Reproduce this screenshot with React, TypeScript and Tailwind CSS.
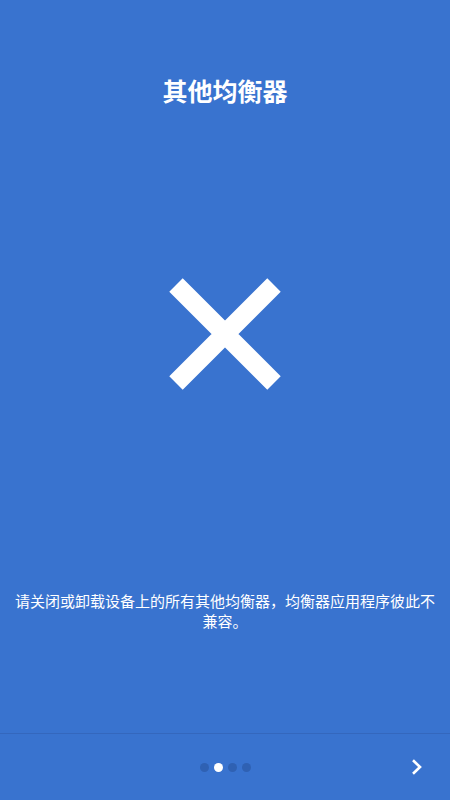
const font = { fontFamily: '"Noto Sans CJK SC", "Noto Sans", sans-serif' };

// Big "X" mark in the middle of the slide
function CrossMark() {
  return (
    <svg width="114" height="114" viewBox="0 0 114 114" className="block">
      <path d="M8 8 L106 106 M106 8 L8 106" stroke="#ffffff" strokeWidth="19" strokeLinecap="butt" />
    </svg>
  );
}

function ChevronNext() {
  return (
    <svg width="12" height="17" viewBox="0 0 12 17" className="block">
      <polyline points="2,1.8 9,8.5 2,15.2" fill="none" stroke="#ffffff" strokeWidth="2.6" />
    </svg>
  );
}

export default function App() {
  const pages = [0, 1, 2, 3];
  const current = 1;

  return (
    <div className="w-[450px] h-[800px] bg-[#3973cf] flex flex-col text-white" style={font}>
      <div className="flex-1 flex flex-col items-center">
        <h1 className="mt-[74px] text-[25px] leading-[32px] font-bold">其他均衡器</h1>
        <div className="mt-[171px]">
          <CrossMark />
        </div>
        <p className="mt-[200px] px-[14px] text-[15px] leading-[20px] text-center">
          请关闭或卸载设备上的所有其他均衡器，均衡器应用程序彼此不兼容。
        </p>
      </div>

      <div className="h-[67px] border-t border-[#3467bd] relative flex items-center justify-center">
        <div className="flex items-center gap-[5px]">
          {pages.map((p) => (
            <span
              key={p}
              className={
                p === current
                  ? 'w-[9px] h-[9px] rounded-full bg-white'
                  : 'w-[9px] h-[9px] rounded-full bg-[#2f61b3]'
              }
            />
          ))}
        </div>
        <button className="absolute right-[27px] top-1/2 -translate-y-1/2">
          <ChevronNext />
        </button>
      </div>
    </div>
  );
}
